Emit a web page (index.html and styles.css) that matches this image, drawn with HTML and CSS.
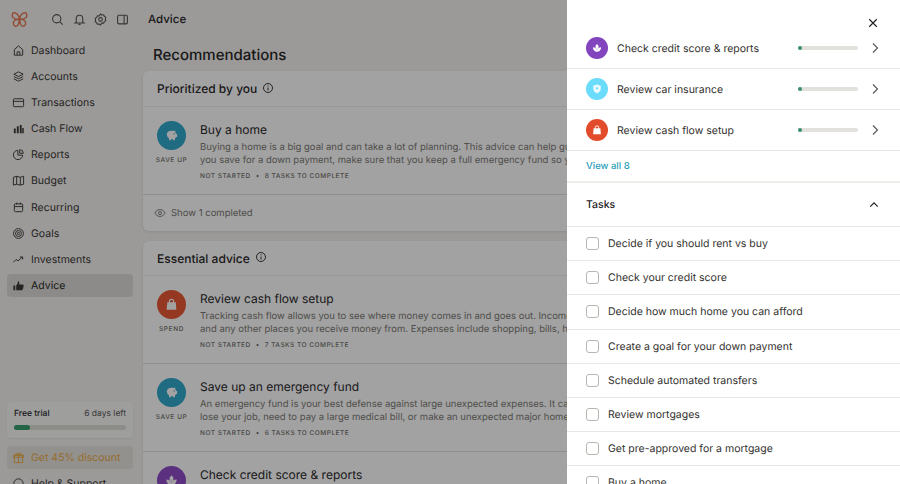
FILE: index.html
```html
<!DOCTYPE html>
<html lang="en">
<head>
<meta charset="utf-8">
<title>Advice</title>
<link rel="stylesheet" href="styles.css">
</head>
<body>
<svg class="defs" width="0" height="0" aria-hidden="true">
  <defs>
    <symbol id="piggy" viewBox="0 0 16 16"><path fill="#fff" d="M3 6.200C3.600 4.200 5.600 3 8 3c.8 0 1.400.1 2 .3L12 2.600v2.200c.6.500 1 1 1.200 1.700H14v3h-1.100c-.3.600-.7 1-1.200 1.400V13H9.800v-1.100H7.200V13H5.300v-2.100C3.800 10 3 8.300 3 6.200z"/><circle cx="10.800" cy="6.300" r=".6" fill="#1d7c96"/></symbol>
    <symbol id="bag" viewBox="0 0 16 16"><path fill="#fff" d="M3.500 5.500h9l.7 8h-10.400z"/><path fill="none" stroke="#fff" stroke-width="1.200" d="M5.800 6V4.600a2.200 2.200 0 0 1 4.400 0V6"/></symbol>
    <symbol id="lotus" viewBox="0 0 16 16"><path fill="#fff" d="M8 2.500l2 2.400v2.600L8 9.500 6 7.500V4.900zM2.500 7c2.500 0 4.500 1.200 5.500 3.500C9 8.200 11 7 13.500 7c0 3.500-2.300 6-5.500 6S2.500 10.500 2.500 7z"/></symbol>
    <symbol id="shield" viewBox="0 0 16 16"><path fill="#fff" opacity=".85" d="M8 2l5 1.800v4c0 3-2 5-5 6.200-3-1.200-5-3.200-5-6.200v-4z"/><path fill="#6bdcfb" d="M8 5.500a1.500 1.500 0 1 1 0 3 1.500 1.500 0 0 1 0-3z"/></symbol>
    <symbol id="info" viewBox="0 0 12 12"><circle cx="6" cy="6" r="4.500" fill="none" stroke="currentColor"/><path d="M6 5.500v3" stroke="currentColor" fill="none"/><circle cx="6" cy="3.800" r=".6" fill="currentColor"/></symbol>
    <symbol id="chev" viewBox="0 0 10 12"><path d="M3 1.500L7.500 6 3 10.500" fill="none" stroke="#55534f" stroke-width="1.100"/></symbol>
  </defs>
</svg>

<div class="app">
  <aside class="sidebar">
    <div class="topbar-left">
      <svg class="logo" viewBox="0 0 18 18"><path fill="none" stroke="#e8714a" stroke-width="1.500" stroke-linejoin="round" d="M9 8.500C8.500 4.500 5.500 1.500 3 1.800 1 2 .8 5 2 6.800 3.300 8.600 6 9 9 8.500zM9 8.500C9.500 4.500 12.500 1.500 15 1.800c2 .2 2.200 3.200 1 5C14.700 8.600 12 9 9 8.500zM8.500 8.700C5.500 8.500 2.800 10 2.500 12.500c-.3 2.500 1.700 4 3.500 3.500C8 15.500 9 12 8.500 8.700zM9.500 8.700C12.500 8.500 15.200 10 15.500 12.500c.3 2.500-1.700 4-3.500 3.500C10 15.500 9 12 9.500 8.700z"/></svg>
      <div class="tools">
        <svg class="tool" viewBox="0 0 12 12"><circle cx="5.300" cy="5.300" r="3.800"/><path d="M8.200 8.200L10.800 10.800"/></svg>
        <svg class="tool" viewBox="0 0 12 12"><path d="M3 8.500V5a3 3 0 0 1 6 0v3.500l1 .7H2zM5 10.500h2"/></svg>
        <svg class="tool" viewBox="0 0 12 12"><circle cx="6" cy="6" r="1.700"/><path d="M6 1l1.300.8 1.600-.1.700 1.400 1.300.9-.4 1.500.4 1.500-1.300.9-.7 1.400-1.600-.1L6 11l-1.300-.8-1.600.1-.7-1.400L1.100 8l.4-1.500L1.100 5l1.300-.9.700-1.400 1.600.1z"/></svg>
        <svg class="tool" viewBox="0 0 12 12"><rect x="1.500" y="2" width="9" height="8" rx="1.200"/><path d="M7.500 2v8"/></svg>
      </div>
    </div>
    <nav class="nav">
      <a class="nav-item"><svg class="nav-icon" viewBox="0 0 14 14"><path d="M2.500 6L7 2l4.500 4v6h-9zM5.500 12V8.500h3V12"/></svg>Dashboard</a>
      <a class="nav-item"><svg class="nav-icon" viewBox="0 0 14 14"><path d="M7 2l5 2.500L7 7 2 4.500zM2 7l5 2.500L12 7M2 9.500L7 12l5-2.500"/></svg>Accounts</a>
      <a class="nav-item"><svg class="nav-icon" viewBox="0 0 14 14"><rect x="1.500" y="3" width="11" height="8.500" rx="1"/><path d="M1.500 5.800h11"/></svg>Transactions</a>
      <a class="nav-item"><svg class="nav-icon nav-fill" viewBox="0 0 14 14"><path d="M2 7h2v5H2zM5.200 4.500h2V12h-2zM8.400 3.200h2V12h-2zM11 6.500h1.600V12H11z"/></svg>Cash Flow</a>
      <a class="nav-item"><svg class="nav-icon" viewBox="0 0 14 14"><path d="M6.300 2.500a5 5 0 1 0 5.200 5.200H6.300zM8.300 1.800v3.900h3.900a4 4 0 0 0-3.900-3.900z"/></svg>Reports</a>
      <a class="nav-item"><svg class="nav-icon" viewBox="0 0 14 14"><path d="M1.500 3.500l3.500-1 4 1 3.500-1v8.500l-3.500 1-4-1-3.500 1zM5 2.500V11M9 3.500V12"/></svg>Budget</a>
      <a class="nav-item"><svg class="nav-icon" viewBox="0 0 14 14"><rect x="2.500" y="3" width="9" height="8.500" rx="1.300"/><path d="M2.500 6h9M5 1.800v2M9 1.800v2"/></svg>Recurring</a>
      <a class="nav-item"><svg class="nav-icon" viewBox="0 0 14 14"><circle cx="7" cy="7" r="5.300"/><circle cx="7" cy="7" r="3.200"/><circle cx="7" cy="7" r="1.200"/></svg>Goals</a>
      <a class="nav-item"><svg class="nav-icon" viewBox="0 0 14 14"><path d="M1.500 10l3-3 2 1.500 4.500-4M8.500 4.300H11.500V7"/></svg>Investments</a>
      <a class="nav-item active"><svg class="nav-icon nav-fill" viewBox="0 0 14 14"><path d="M1.500 7h2v5h-2zM4.500 7c1-.8 1.700-2 2-4.500.9-.4 1.600.7 1.300 3.300h4.400c.8 1-.3 5.500-1.200 6.200H4.500z"/></svg>Advice</a>
    </nav>
    <div class="side-bottom">
      <div class="trial">
        <div class="trial-row"><strong>Free trial</strong><span>6 days left</span></div>
        <div class="trial-bar"><div class="trial-fill"></div></div>
      </div>
      <a class="discount"><svg class="nav-icon gift" viewBox="0 0 14 14"><path d="M2.500 4.500h9v8h-9zM1.800 4.500h10.400v2.300H1.800zM7 4.500v8M7 4.500C5 4.500 4 3.500 4.500 2.500S7 2.500 7 4.500c0-2 2-3 2.500-2S9 4.500 7 4.500z"/></svg>Get 45% discount</a>
      <a class="nav-item help"><svg class="nav-icon" viewBox="0 0 14 14"><circle cx="7" cy="7" r="5"/></svg>Help &amp; Support</a>
    </div>
  </aside>

  <div class="content">
    <header class="page-head">Advice</header>
    <main class="main">
      <h1>Recommendations</h1>
      <section class="card">
        <h2 class="card-title">Prioritized by you <svg class="info" viewBox="0 0 12 12"><use href="#info"/></svg></h2>
        <article class="advice">
          <div class="badge"><span class="circle teal"><svg class="glyph"><use href="#piggy"/></svg></span><span class="cat">SAVE UP</span></div>
          <div class="body">
            <h3>Buy a home</h3>
            <p>Buying a home is a big goal and can take a lot of planning. This advice can help guide you through the process. While<br>you save for a down payment, make sure that you keep a full emergency fund so you are prepared for any surprises.</p>
            <div class="meta">NOT STARTED<i>•</i>8 TASKS TO COMPLETE</div>
          </div>
        </article>
        <div class="show"><svg class="eye" viewBox="0 0 14 14"><path d="M1 7c1.500-2.700 3.500-4 6-4s4.500 1.300 6 4c-1.500 2.700-3.500 4-6 4s-4.500-1.300-6-4z"/><circle cx="7" cy="7" r="1.800"/></svg>Show 1 completed</div>
      </section>
      <section class="card tight">
        <h2 class="card-title">Essential advice <svg class="info" viewBox="0 0 12 12"><use href="#info"/></svg></h2>
        <article class="advice">
          <div class="badge"><span class="circle red"><svg class="glyph"><use href="#bag"/></svg></span><span class="cat">SPEND</span></div>
          <div class="body">
            <h3>Review cash flow setup</h3>
            <p>Tracking cash flow allows you to see where money comes in and goes out. Income includes paychecks, side hustles<br>and any other places you receive money from. Expenses include shopping, bills, housing, debt payments and more.</p>
            <div class="meta">NOT STARTED<i>•</i>7 TASKS TO COMPLETE</div>
          </div>
        </article>
        <article class="advice ruled">
          <div class="badge"><span class="circle teal"><svg class="glyph"><use href="#piggy"/></svg></span><span class="cat">SAVE UP</span></div>
          <div class="body">
            <h3>Save up an emergency fund</h3>
            <p>An emergency fund is your best defense against large unexpected expenses. It can help you cover your costs if you<br>lose your job, need to pay a large medical bill, or make an unexpected major home repair without going into debt.</p>
            <div class="meta">NOT STARTED<i>•</i>6 TASKS TO COMPLETE</div>
          </div>
        </article>
        <article class="advice ruled">
          <div class="badge"><span class="circle purple"><svg class="glyph"><use href="#lotus"/></svg></span><span class="cat">SAVE UP</span></div>
          <div class="body">
            <h3>Check credit score &amp; reports</h3>
          </div>
        </article>
      </section>
    </main>
  </div>
</div>

<div class="overlay"></div>

<aside class="drawer">
  <div class="close-row"><svg class="close" viewBox="0 0 12 12"><path d="M1.500 1.500l9 9M10.500 1.500l-9 9"/></svg></div>
  <ul class="plans">
    <li class="plan"><span class="dot-icon d-purple"><svg class="glyph-sm"><use href="#lotus"/></svg></span><span class="plan-name">Check credit score &amp; reports</span><span class="mini"><b></b></span><svg class="chev" viewBox="0 0 10 12"><use href="#chev"/></svg></li>
    <li class="plan"><span class="dot-icon d-sky"><svg class="glyph-sm"><use href="#shield"/></svg></span><span class="plan-name">Review car insurance</span><span class="mini"><b></b></span><svg class="chev" viewBox="0 0 10 12"><use href="#chev"/></svg></li>
    <li class="plan"><span class="dot-icon d-red"><svg class="glyph-sm"><use href="#bag"/></svg></span><span class="plan-name">Review cash flow setup</span><span class="mini"><b></b></span><svg class="chev" viewBox="0 0 10 12"><use href="#chev"/></svg></li>
  </ul>
  <a class="view-all">View all 8</a>
  <div class="tasks-head"><span>Tasks</span><svg class="up" viewBox="0 0 12 8"><path d="M1.500 6.500L6 2l4.500 4.500"/></svg></div>
  <ul class="tasks">
    <li class="task"><span class="box"></span>Decide if you should rent vs buy</li>
    <li class="task"><span class="box"></span>Check your credit score</li>
    <li class="task"><span class="box"></span>Decide how much home you can afford</li>
    <li class="task"><span class="box"></span>Create a goal for your down payment</li>
    <li class="task"><span class="box"></span>Schedule automated transfers</li>
    <li class="task"><span class="box"></span>Review mortgages</li>
    <li class="task"><span class="box"></span>Get pre-approved for a mortgage</li>
    <li class="task"><span class="box"></span>Buy a home</li>
  </ul>
</aside>
</body>
</html>
```

FILE: styles.css
```css
* { box-sizing: border-box; }
html, body { margin: 0; height: 484px; overflow: hidden; }
body { font-family: Inter, "Liberation Sans", sans-serif; color: #22201d; background: #f3f2f0; position: relative; width: 900px; text-rendering: geometricPrecision; }
.defs { position: absolute; }
h1, h2, h3, p, ul { margin: 0; padding: 0; }
ul { list-style: none; }

.app { display: flex; height: 484px; overflow: hidden; }

/* sidebar */
.sidebar { width: 142px; flex: none; display: flex; flex-direction: column; padding: 0 9px 0 7px; height: 484px; overflow: hidden; }
.topbar-left { height: 38px; flex: none; display: flex; align-items: center; padding-left: 4px; }
.logo { width: 17px; height: 17px; flex: none; }
.tools { display: flex; gap: 8.500px; margin-left: 23px; }
.tool { width: 13px; height: 13px; fill: none; stroke: #4f4e4c; stroke-width: 1; }
.nav { display: flex; flex-direction: column; gap: 3.200px; padding-top: .5px; }
.nav-item { height: 23px; display: flex; align-items: center; gap: 6px; padding-left: 5px; border-radius: 4px; font-size: 10.500px; color: #33312e; flex: none; }
.nav-item.active { background: #dcdad6; color: #22201d; }
.nav-icon { width: 13px; height: 13px; flex: none; fill: none; stroke: #33312e; stroke-width: 1; }
.nav-fill { fill: #33312e; stroke: none; }
.side-bottom { margin-top: auto; display: flex; flex-direction: column; height: 82px; flex: none; }
.trial { height: 36px; flex: none; background: #f8f8f7; border-radius: 4px; padding: 7px 7px 0; box-shadow: 0 1px 2px rgba(0,0,0,.06); }
.trial-row { display: flex; justify-content: space-between; align-items: baseline; font-size: 8.500px; color: #55534f; }
.trial-row strong { font-weight: 500; color: #22201d; }
.trial-bar { height: 5px; background: #dcdbd6; border-radius: 3px; margin-top: 6px; }
.trial-fill { width: 16px; height: 5px; background: #2f9e6a; border-radius: 3px; }
.discount { margin-top: 8px; height: 23px; background: #e6e3de; border-radius: 4px; display: flex; align-items: center; gap: 6px; padding-left: 5px; font-size: 10.500px; color: #eaa93e; flex: none; }
.gift { stroke: #eaa93e; }
.help { margin-top: 3px; }

/* content */
.content { flex: 1; min-width: 0; }
.page-head { height: 38px; display: flex; align-items: center; padding-left: 6px; font-size: 11.500px; font-weight: 500; }
.main { padding: 0 0 0 1px; }
h1 { font-size: 15px; font-weight: 500; line-height: 20px; margin: 7px 0 6px 10px; }
.card { background: #fff; border-radius: 6px; box-shadow: 0 1px 3px rgba(0,0,0,.1); margin-bottom: 10px; width: 757px; }
.card-title { height: 36px; display: flex; align-items: center; gap: 5px; padding-left: 14px; font-size: 12px; font-weight: 500; border-bottom: 1px solid #eeede9; }
.tight .card-title { height: 35px; }
.info { width: 12px; height: 12px; color: #33312e; margin-top: -2px; }
.advice { display: flex; padding: 14px 0 12px 14px; height: 87px; }
.ruled { border-top: 1px solid #dfded9; height: 87.500px; }
.badge { width: 29px; flex: none; display: flex; flex-direction: column; align-items: center; }
.circle { width: 29px; height: 29px; border-radius: 50%; display: flex; align-items: center; justify-content: center; flex: none; }
.teal { background: #2aa6cb; }
.red { background: #e9532f; }
.purple { background: #8c45c4; }
.glyph { width: 15px; height: 15px; }
.cat { font-size: 6.500px; letter-spacing: .6px; color: #6b6964; margin-top: 6px; font-weight: 500; white-space: nowrap; }
.body { margin-left: 14px; min-width: 0; white-space: nowrap; }
h3 { font-size: 12px; font-weight: 400; line-height: 16px; margin-top: 1px; }
p { font-size: 9.500px; line-height: 13px; color: #77756f; margin-top: 3px; }
.meta { font-size: 6.500px; letter-spacing: .5px; color: #6b6964; font-weight: 500; margin-top: 5px; line-height: 9px; }
.meta i { font-style: normal; margin: 0 5px; }
.show { height: 37px; border-top: 1px solid #dfded9; display: flex; align-items: center; gap: 5px; padding-left: 11px; font-size: 9.500px; color: #77756f; }
.eye { width: 12px; height: 12px; fill: none; stroke: #6b6964; stroke-width: 1; }

/* overlay + drawer */
.overlay { position: absolute; inset: 0; background: rgba(15,15,15,.39); }
.drawer { position: absolute; top: 0; right: 0; bottom: 0; width: 333px; background: #fff; overflow: hidden; }
.close-row { height: 28px; display: flex; justify-content: flex-end; align-items: flex-end; padding-right: 22px; }
.close { width: 10px; height: 10px; fill: none; stroke: #22201d; stroke-width: 1.400; }
.plan { height: 41px; display: flex; align-items: center; padding: 0 20px 0 19px; border-bottom: 1px solid #e8e7e3; font-size: 10.500px; color: #33312e; }
.dot-icon { width: 22px; height: 22px; border-radius: 50%; display: flex; align-items: center; justify-content: center; flex: none; }
.d-purple { background: #8245bd; }
.d-sky { background: #6bdcfb; }
.d-red { background: #e24c2b; }
.glyph-sm { width: 12px; height: 12px; }
.plan-name { margin-left: 9px; flex: 1; }
.mini { width: 60px; height: 4px; background: #e2e1dd; border-radius: 2px; display: block; flex: none; }
.mini b { display: block; width: 4px; height: 4px; border-radius: 50%; background: #3b8f6d; }
.chev { width: 10px; height: 12px; margin-left: 12px; flex: none; }
.view-all { display: flex; align-items: center; height: 32px; padding-left: 19px; font-size: 9.500px; font-weight: 500; color: #2a9fb8; border-bottom: 2px solid #eeede9; }
.tasks-head { height: 44px; display: flex; align-items: center; justify-content: space-between; padding: 0 21px 0 19px; font-size: 10.500px; font-weight: 500; border-bottom: 1px solid #e8e7e3; }
.up { width: 10px; height: 7px; fill: none; stroke: #22201d; stroke-width: 1.400; }
.task { height: 34.200px; display: flex; align-items: center; gap: 9px; padding-left: 19px; font-size: 10.500px; color: #33312e; border-bottom: 1px solid #e8e7e3; }
.box { width: 13px; height: 13px; border: 1px solid #b8b6b1; border-radius: 3px; flex: none; }
```
